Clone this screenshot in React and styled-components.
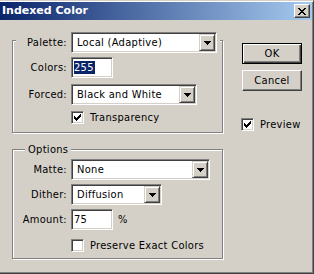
import styled, { createGlobalStyle } from 'styled-components'

const Global = createGlobalStyle`
html, body {
  margin: 0;
  background: #d4d0c8;
}

body {
  font-family: "DejaVu Sans Condensed", "DejaVu Sans", sans-serif;
  font-size: 11px;
  letter-spacing: 0.3px;
  color: #000;
}
`

const Window = styled.div`
  box-sizing: border-box;
  width: 314px;
  height: 274px;
  background: #d4d0c8;
  border-top: 1px solid #d4d0c8;
  border-right: 1px solid #404040;
  border-bottom: 1px solid #404040;
  box-shadow: inset 0 1px 0 #fff, inset -1px -1px 0 #808080;
  padding-top: 1px;
  overflow: hidden;
`

const TitleBar = styled.div`
  display: flex;
  align-items: center;
  justify-content: space-between;
  height: 18px;
  margin-right: 1px;
  padding: 0 2px 0 2px;
  background: linear-gradient(to right, #0a246a, #a6caf0);
`

const Title = styled.span`
  color: #fff;
  font-family: "DejaVu Sans", sans-serif;
  font-weight: bold;
  font-size: 11px;
  letter-spacing: 0;
  line-height: 18px;
`

const TitleButton = styled.div`
  box-sizing: border-box;
  width: 16px;
  height: 14px;
  display: flex;
  align-items: center;
  justify-content: center;
  background: #d4d0c8;
  border: 1px solid;
  border-color: #fff #404040 #404040 #fff;
  box-shadow: inset -1px -1px 0 #808080;
`

const Body = styled.div`
  display: flex;
  padding: 20px 0 0 12px;
`

const LeftColumn = styled.div`
  display: flex;
  flex-direction: column;
  gap: 16px;
  width: 211px;
`

const Group = styled.div`
  display: flex;
  flex-direction: column;
  border: 1px solid #808080;
  box-shadow: inset 1px 1px 0 #fff, 1px 1px 0 #fff;
  padding-bottom: ${p => p.$bottom}px;
`

const Caption = styled.span`
  align-self: flex-start;
  margin: -7px 0 0 12px;
  padding: 0 3px;
  line-height: 13px;
  background: #d4d0c8;
`

const Row = styled.div`
  display: grid;
  grid-template-columns: ${p => p.$label || 54}px auto;
  column-gap: 4px;
  align-items: center;
  margin-top: ${p => p.$top}px;
`

const LegendRow = styled(Row)`
  margin-left: 3px;
  margin-right: 2px;
  background: #d4d0c8;
`

const Label = styled.span`
  text-align: right;
  white-space: nowrap;
`

const Fields = styled.div`
  display: flex;
  align-items: center;
  gap: 5px;
`

const Sunken = styled.div`
  box-sizing: border-box;
  border: 1px solid;
  border-color: #808080 #fff #fff #808080;
  box-shadow: inset 1px 1px 0 #404040, inset -1px -1px 0 #d4d0c8;
  background: #fff;
`

const Select = styled(Sunken)`
  display: flex;
  align-items: center;
  width: ${p => p.$width}px;
  height: 21px;
  padding: 1px;
`

const Value = styled.span`
  flex: 1;
  padding-left: 4px;
  white-space: nowrap;
  overflow: hidden;
`

const DropButton = styled.div`
  box-sizing: border-box;
  width: 16px;
  height: 17px;
  display: flex;
  align-items: center;
  justify-content: center;
  background: #d4d0c8;
  border: 1px solid;
  border-color: #d4d0c8 #404040 #404040 #d4d0c8;
  box-shadow: inset 1px 1px 0 #fff, inset -1px -1px 0 #808080;
`

const Input = styled(Sunken)`
  display: flex;
  align-items: center;
  width: 42px;
  height: 21px;
  padding-left: 2px;
`

const Selected = styled.span`
  background: #0a246a;
  color: #fff;
  line-height: 13px;
  padding: 0 1px 0 0;
`

const CheckRow = styled.label`
  display: flex;
  align-items: center;
  gap: 6px;
  margin: ${p => p.$top}px 0 0 ${p => p.$left}px;
  white-space: nowrap;
`

const Box = styled(Sunken)`
  width: 13px;
  height: 13px;
  display: flex;
  align-items: center;
  justify-content: center;
`

const RightColumn = styled.div`
  display: flex;
  flex-direction: column;
  margin-left: 19px;
  padding-top: 3px;
`

const Button = styled.button`
  box-sizing: border-box;
  width: 60px;
  height: 21px;
  margin-top: ${p => p.$top || 0}px;
  padding: 0;
  font: inherit;
  letter-spacing: inherit;
  color: #000;
  background: #d4d0c8;
  border: 1px solid;
  border-color: ${p => (p.$default ? '#000' : '#fff #404040 #404040 #fff')};
  box-shadow: ${p =>
    p.$default
      ? 'inset 1px 1px 0 #fff, inset -1px -1px 0 #404040, inset -2px -2px 0 #808080'
      : 'inset -1px -1px 0 #808080'};
`

const Check = () => (
  <svg width="7" height="7" viewBox="0 0 7 7" shapeRendering="crispEdges">
    <path
      fill="#000"
      d="M6 0h1v3h-1zM5 1h1v3h-1zM4 2h1v3h-1zM0 2h1v3h-1zM1 3h1v3h-1zM2 4h1v3h-1zM3 3h1v3h-1z"
    />
  </svg>
)

const Arrow = () => (
  <svg width="7" height="4" viewBox="0 0 7 4" shapeRendering="crispEdges">
    <path fill="#000" d="M0 0h7v1h-7zM1 1h5v1h-5zM2 2h3v1h-3zM3 3h1v1h-1z" />
  </svg>
)

const CloseIcon = () => (
  <svg width="8" height="7" viewBox="0 0 8 7" shapeRendering="crispEdges">
    <path
      fill="#000"
      d="M0 0h2v1h-2zM6 0h2v1h-2zM1 1h2v1h-2zM5 1h2v1h-2zM2 2h4v1h-4zM3 3h2v1h-2zM2 4h4v1h-4zM1 5h2v1h-2zM5 5h2v1h-2zM0 6h2v1h-2zM6 6h2v1h-2z"
    />
  </svg>
)

const Combo = ({ width, value }) => (
  <Select $width={width}>
    <Value>{value}</Value>
    <DropButton><Arrow /></DropButton>
  </Select>
)

const CheckBox = ({ checked, label, top = 0, left = 58 }) => (
  <CheckRow $top={top} $left={left}>
    <Box>{checked && <Check />}</Box>
    {label}
  </CheckRow>
)

const App = () => (
  <Window>
    <Global />
    <TitleBar>
      <Title>Indexed Color</Title>
      <TitleButton><CloseIcon /></TitleButton>
    </TitleBar>
    <Body>
      <LeftColumn>
        <Group $bottom={8}>
          <LegendRow $top={-9} $label={51}>
            <Label>Palette:</Label>
            <Combo width={146} value="Local (Adaptive)" />
          </LegendRow>
          <Row $top={4}>
            <Label>Colors:</Label>
            <Input><Selected>255</Selected></Input>
          </Row>
          <Row $top={6}>
            <Label>Forced:</Label>
            <Combo width={126} value="Black and White" />
          </Row>
          <CheckBox checked label="Transparency" top={6} />
        </Group>
        <Group $bottom={6}>
          <Caption>Options</Caption>
          <Row $top={3}>
            <Label>Matte:</Label>
            <Combo width={139} value="None" />
          </Row>
          <Row $top={4}>
            <Label>Dither:</Label>
            <Combo width={91} value="Diffusion" />
          </Row>
          <Row $top={4}>
            <Label>Amount:</Label>
            <Fields>
              <Input>75</Input>
              <span>%</span>
            </Fields>
          </Row>
          <CheckBox label="Preserve Exact Colors" top={9} />
        </Group>
      </LeftColumn>
      <RightColumn>
        <Button $default>OK</Button>
        <Button $top={6}>Cancel</Button>
        <CheckBox checked label="Preview" top={27} left={-1} />
      </RightColumn>
    </Body>
  </Window>
)

export default App
